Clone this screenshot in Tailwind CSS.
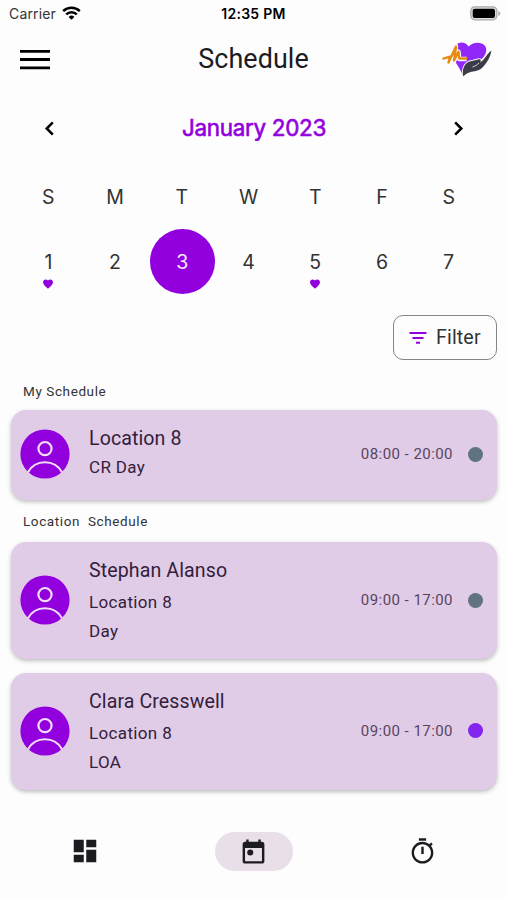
<!DOCTYPE html>
<html lang="en">
<head>
<meta charset="utf-8">
<title>Schedule</title>
<script src="https://cdn.jsdelivr.net/npm/@tailwindcss/browser@4"></script>
</head>
<body class="w-[507px] h-[900px] overflow-hidden bg-[#fdfdfd] font-[Roboto,sans-serif] text-[#1c1b1f] flex flex-col">
<svg class="hidden">
  <symbol id="avatar" viewBox="0 0 50 50">
    <circle cx="25" cy="25" r="24.6" fill="#9200de"/>
    <g fill="none" stroke="#f4dff9" stroke-width="2.200"><circle cx="25" cy="19.600" r="6.600"/><path d="M8 43.200A19.500 19.500 0 0 1 42 43.200"/></g>
  </symbol>
  <symbol id="heart" viewBox="0 0 24 24"><path fill="#9200de" d="M12 21.350l-1.450-1.320C5.400 15.360 2 12.280 2 8.500 2 5.420 4.420 3 7.500 3c1.740 0 3.410.81 4.500 2.090C13.090 3.810 14.760 3 16.500 3 19.580 3 22 5.420 22 8.500c0 3.780-3.400 6.860-8.550 11.540L12 21.350z"/></symbol>
</svg>

<div class="h-[28px] shrink-0 grid grid-cols-3 items-center px-[9px] font-[Inter,sans-serif] text-[13.500px] leading-none">
  <div class="flex items-center gap-[6px]"><span class="text-[14px] tracking-[0.150px] text-[#333]">Carrier</span>
    <svg class="w-[19px] h-[14px] -mt-[2px]" viewBox="0 0 19 14"><g fill="none" stroke="#000" stroke-width="2.500"><path d="M1.200 5.200a12 12 0 0 1 16.600 0"/><path d="M4.200 8.300a7.600 7.600 0 0 1 10.600 0"/></g><path d="M9.500 13.800L6.600 10.900a4.100 4.100 0 0 1 5.800 0z"/></svg>
  </div>
  <div class="text-center font-semibold text-[14px] tracking-[0.250px] whitespace-nowrap text-black">12:35 PM</div>
  <svg class="justify-self-end w-[31px] h-[15px] -mr-[3px] -mt-[1px]" viewBox="0 0 31 15"><rect x=".8" y=".8" width="26" height="13" rx="4" fill="#ddd" stroke="#aaa" stroke-width="1.300"/><rect x="2.700" y="2.700" width="22.300" height="9.200" rx="2"/><path d="M28.300 5v5q2-.7 2-2.500t-2-2.500" fill="#aaa"/></svg>
</div>

<header class="h-[62px] shrink-0 flex items-center justify-between pl-[20px] pr-[14px]">
  <div class="w-[45px] pt-[2px]"><svg class="w-[30px] h-[22px]" viewBox="0 0 30 22"><path d="M0 2.300h30M0 10.500h30M0 18.800h30" stroke="#000" stroke-width="2.800"/></svg></div>
  <h1 class="text-[26.900px] leading-none tracking-[0.100px] pt-[1px]">Schedule</h1>
  <svg class="w-[51px] h-[36px]" viewBox="0 0 51 36">
    <path fill="#9227fa" d="M20 32.500C18.500 27.500 10.500 20 11.500 11 12 5 15 1.700 19.500 1.600c3 0 5.500 1.400 7 3.900C29 3 32 1.600 36 1.700c5 .1 8.800 3.300 8.300 8C43.600 18 31 25 20 32.500z"/>
    <path d="M.7 18L8 15.700 6.300 22 14 5 12 20l4.500-9.300.7 7.300h7.500" fill="none" stroke="#fdfdfd" stroke-width="4.500" stroke-linejoin="round"/>
    <path d="M.5 17.800L8 15.700 6.500 21.500 14 5.500 12 19.500l4.500-8.800.7 6.800h8" fill="none" stroke="#e98a11" stroke-width="2.400" stroke-linejoin="round"/>
    <path d="M21 35.200C19.800 25.500 24 20.500 31 19.800l6-1.500c2.500 0 2.300 2.200.3 3.500C42.500 19.500 44 13.500 49.500 9.500 48.500 15.500 45.500 21.500 41 26c-4 4.500-9 4-13 5.200-3 .8-5 2.600-7 4z" fill="#3c3b48" stroke="#fdfdfd" stroke-width="2" paint-order="stroke"/>
    <path d="M30.500 26c3-1 4.500-2 6.500-4" fill="none" stroke="#fdfdfd" stroke-width=".8"/>
  </svg>
</header>

<div class="h-[76px] shrink-0 flex items-center justify-between pl-[37px] pr-[36px]">
  <svg class="w-[25px] h-[25px]" viewBox="0 0 24 24"><path d="M15.200 6.100L9.300 12l5.900 5.900" fill="none" stroke="#000" stroke-width="2.400"/></svg>
  <div class="font-[Inter,sans-serif] text-[22.500px] leading-none tracking-[-0.320px] text-[#9200de] [-webkit-text-stroke:0.600px_#9200de]">January 2023</div>
  <svg class="w-[25px] h-[25px]" viewBox="0 0 24 24"><path d="M8.800 6.100l5.900 5.900-5.900 5.900" fill="none" stroke="#000" stroke-width="2.400"/></svg>
</div>

<div class="h-[144px] shrink-0 pl-[15px] pr-[25px] font-[Inter,sans-serif] text-[19.500px] leading-none text-[#333] grid grid-cols-7 grid-rows-[63px_65px] items-center justify-items-center">
  <div>S</div><div>M</div><div>T</div><div>W</div><div>T</div><div>F</div><div>S</div>
  <div class="relative pt-[3px]">1<svg class="absolute left-1/2 -translate-x-1/2 top-[28px] w-[13px] h-[12px]"><use href="#heart"/></svg></div>
  <div class="pt-[3px]">2</div>
  <div class="size-[65px] rounded-full bg-[#9200de] text-[#f9eaff] flex items-center justify-center pt-[3px] ml-px">3</div>
  <div class="pt-[3px]">4</div>
  <div class="relative pt-[3px]">5<svg class="absolute left-1/2 -translate-x-1/2 top-[28px] w-[13px] h-[12px]"><use href="#heart"/></svg></div>
  <div class="pt-[3px]">6</div><div class="pt-[3px]">7</div>
</div>

<div class="h-[50px] shrink-0 pt-[5px] pr-[10px] flex justify-end">
  <button class="w-[104px] h-[45px] rounded-[10px] border-[1.500px] border-[#858585] flex items-center pl-[15px] gap-[9px] text-[19.600px] leading-none tracking-[0.150px] text-[#333]">
    <svg class="w-[18px] h-[12px]" viewBox="0 0 18 12"><path d="M.5 1.100h17M3.500 5.900h11M7 10.700h4" stroke="#9200de" stroke-width="2"/></svg><span class="pt-[1px]">Filter</span>
  </button>
</div>

<main class="flex flex-col shrink-0 pl-[11px] pr-[10px] text-[#33203b]">
  <h2 class="h-[50px] pt-[24px] pl-[12px] text-[13.500px] leading-[14px] tracking-[0.600px] text-[#333]">My Schedule</h2>
  <section class="h-[90px] rounded-[15px] bg-[#e1cce7] shadow-[0_2px_4px_rgba(0,0,0,0.25)] flex items-center pl-[9px] pr-[14px] pb-[2px]">
    <svg class="size-[50px]"><use href="#avatar"/></svg>
    <div class="ml-[19px] flex-1 -mt-[2px]"><div class="text-[19.600px] leading-[28px] tracking-[0.080px]">Location 8</div><div class="text-[17px] leading-[29px] tracking-[0.350px]">CR Day</div></div>
    <div class="text-[15px] tracking-[0.450px] text-[#58445f] pt-[1px]">08:00 - 20:00</div><div class="ml-[15px] size-[15px] rounded-full bg-[#61737f]"></div>
  </section>
  <h2 class="h-[42px] pt-[14px] pl-[12px] text-[13.500px] leading-[14px] tracking-[0.600px] text-[#333] whitespace-pre">Location  Schedule</h2>
  <section class="h-[117px] rounded-[15px] bg-[#e1cce7] shadow-[0_2px_4px_rgba(0,0,0,0.25)] flex items-center pl-[9px] pr-[14px] pb-[1px]">
    <svg class="size-[50px]"><use href="#avatar"/></svg>
    <div class="ml-[19px] flex-1"><div class="text-[19.600px] leading-[32px] tracking-[0.100px]">Stephan Alanso</div><div class="text-[17px] leading-[30px] tracking-[0.350px]">Location 8</div><div class="text-[17px] leading-[29px] tracking-[0.350px]">Day</div></div>
    <div class="text-[15px] tracking-[0.450px] text-[#58445f]">09:00 - 17:00</div><div class="ml-[15px] size-[15px] rounded-full bg-[#61737f]"></div>
  </section>
  <section class="mt-[14px] h-[117px] rounded-[15px] bg-[#e1cce7] shadow-[0_2px_4px_rgba(0,0,0,0.25)] flex items-center pl-[9px] pr-[14px] pb-[2px]">
    <svg class="size-[50px]"><use href="#avatar"/></svg>
    <div class="ml-[19px] flex-1 pt-[1px]"><div class="text-[19.600px] leading-[32px] tracking-[0.080px]">Clara Cresswell</div><div class="text-[17px] leading-[30px] tracking-[0.350px]">Location 8</div><div class="text-[17px] leading-[29px] tracking-[0.350px]">LOA</div></div>
    <div class="text-[15px] tracking-[0.450px] text-[#58445f] pt-[1px]">09:00 - 17:00</div><div class="ml-[15px] size-[15px] rounded-full bg-[#8424ef]"></div>
  </section>
</main>

<nav class="flex-1 grid grid-cols-3 justify-items-center pt-[41px]">
  <div class="h-[40px] flex items-center"><svg class="size-[30px]" viewBox="0 0 24 24" fill="#1c1b1f"><path d="M3 13h8V3H3v10zm0 8h8v-6H3v6zm10 0h8V11h-8v10zm0-18v6h8V3h-8z"/></svg></div>
  <div class="w-[78px] h-[39px] rounded-full bg-[#e9dfe9] flex items-center justify-center mt-px"><svg class="size-[29px]" viewBox="0 0 24 24" fill="#1c1b1f"><path d="M19 4h-1V2h-2v2H8V2H6v2H5c-1.110 0-1.990.9-1.990 2L3 20c0 1.100.89 2 2 2h14c1.100 0 2-.9 2-2V6c0-1.100-.9-2-2-2zm0 16H5V9h14v11z"/><circle cx="9.300" cy="12.900" r="2.500"/></svg></div>
  <div class="h-[40px] flex items-center"><svg class="size-[29px]" viewBox="0 0 24 24" fill="#1c1b1f"><path d="M15 1H9v2h6V1zm-4 13h2V8h-2v6zm8.030-6.610l1.420-1.420c-.43-.51-.9-.99-1.410-1.410l-1.420 1.420C16.070 4.740 14.120 4 12 4c-4.970 0-9 4.030-9 9s4.020 9 9 9 9-4.030 9-9c0-2.120-.74-4.070-1.970-5.610zM12 20c-3.870 0-7-3.130-7-7s3.130-7 7-7 7 3.130 7 7-3.130 7-7 7z"/></svg></div>
</nav>
</body>
</html>
